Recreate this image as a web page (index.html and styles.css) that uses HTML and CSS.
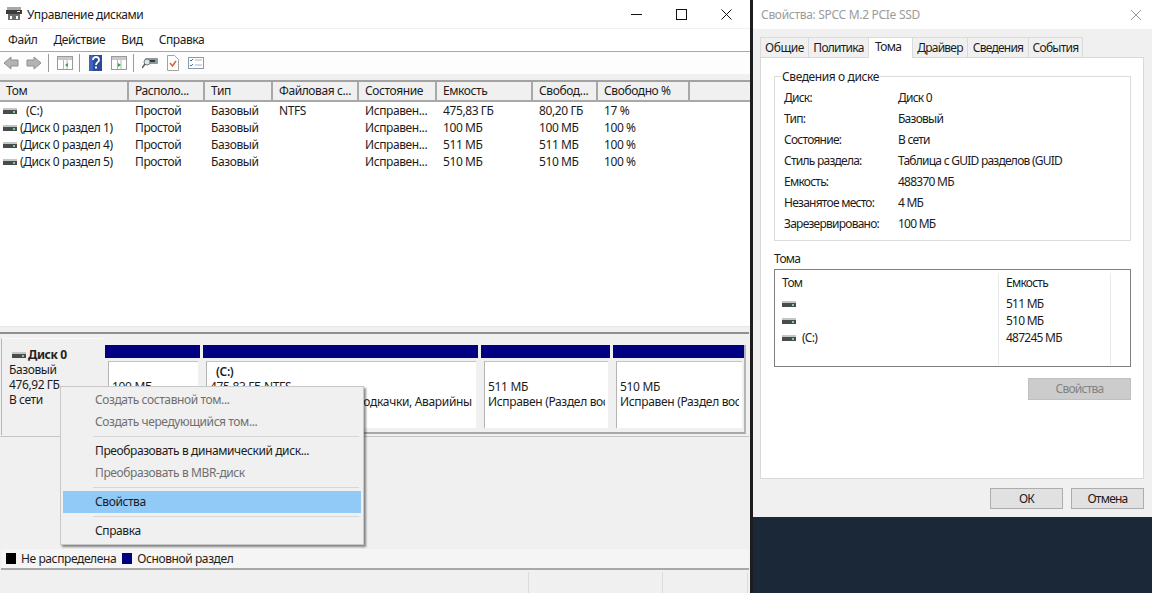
FILE: index.html
```html
<!DOCTYPE html>
<html lang="ru">
<head>
<meta charset="utf-8">
<title>Управление дисками</title>
<link rel="stylesheet" href="styles.css">
</head>
<body>
<svg class="defs" width="0" height="0" aria-hidden="true">
  <defs>
    <g id="drive">
      <rect x="0" y="0" width="14" height="2" fill="#c4c6c6"/>
      <rect x="0" y="2" width="14" height="4" fill="#4a4c4c"/>
      <rect x="10" y="3" width="2" height="2" fill="#7fd08a"/>
    </g>
  </defs>
</svg>

<main class="window mgmt">
  <header class="titlebar">
    <svg class="app-icon" width="16" height="14" viewBox="0 0 16 14">
      <rect x="1" y="0" width="14" height="3" fill="#a8a8a8"/>
      <path d="M0 3h16v4H0z" fill="#3c3c3c"/>
      <path d="M2 7h12v6H2z" fill="#6d6d6d"/>
      <rect x="4" y="9" width="2" height="3" fill="#fff"/>
      <rect x="10" y="9" width="2" height="3" fill="#fff"/>
      <rect x="11" y="4" width="3" height="1" fill="#cfe8d2"/>
    </svg>
    <span class="title">Управление дисками</span>
    <div class="controls">
      <svg width="11" height="11" viewBox="0 0 11 11"><path d="M0 5.500h11" stroke="#111" fill="none"/></svg>
      <svg width="11" height="11" viewBox="0 0 11 11"><rect x=".5" y=".5" width="10" height="10" stroke="#111" fill="none"/></svg>
      <svg width="11" height="11" viewBox="0 0 11 11"><path d="M.5.5l10 10M10.500.5l-10 10" stroke="#111" fill="none"/></svg>
    </div>
  </header>

  <nav class="menubar">
    <span>Файл</span><span>Действие</span><span>Вид</span><span>Справка</span>
  </nav>

  <div class="toolbar">
    <svg class="tool" width="16" height="16" viewBox="0 0 16 16"><path d="M8 2L1 8l7 6v-3h7V5H8z" fill="#b4b4b4" stroke="#8f8f8f"/></svg>
    <svg class="tool tool-fwd" width="16" height="16" viewBox="0 0 16 16"><path d="M8 2l7 6-7 6v-3H1V5h7z" fill="#b4b4b4" stroke="#8f8f8f"/></svg>
    <i class="tool-sep"></i>
    <svg class="tool" width="16" height="14" viewBox="0 0 16 14"><rect x=".5" y=".5" width="15" height="13" fill="#fff" stroke="#9a9a9a"/><path d="M1 1h14v3H1z" fill="#c8c8c8"/><path d="M6.500 4v9M10 4v9" stroke="#b5b5b5"/><path d="M11 7v4L8 9z" fill="#3da04a"/></svg>
    <i class="tool-sep"></i>
    <svg class="tool tool-help" width="13" height="16" viewBox="0 0 13 16"><rect width="13" height="16" fill="#2b4a9b"/><rect width="4" height="16" fill="#3f63bd"/><path d="M4 5c0-4 6-4 6 0 0 2-3 2.500-3 5" stroke="#fff" stroke-width="1.800" fill="none"/><rect x="6" y="11.500" width="2" height="2" fill="#fff"/></svg>
    <svg class="tool tool-tight" width="16" height="14" viewBox="0 0 16 14"><rect x=".5" y=".5" width="15" height="13" fill="#fff" stroke="#9a9a9a"/><path d="M1 1h14v3H1z" fill="#c8c8c8"/><path d="M6.500 4v9M10 4v9" stroke="#b5b5b5"/><path d="M7 7v4l3-2z" fill="#3da04a"/></svg>
    <i class="tool-sep"></i>
    <svg class="tool" width="16" height="14" viewBox="0 0 16 14"><rect x="3" y="2" width="13" height="6" rx="1" fill="#8d9a9c"/><rect x="8" y="4" width="5" height="2" fill="#2e3b3d"/><circle cx="5" cy="6" r="3" fill="#d8e4e8" stroke="#6f7b7e"/><path d="M3 8l-3 4" stroke="#6a5a48" stroke-width="1.500"/></svg>
    <svg class="tool tool-doc" width="12" height="16" viewBox="0 0 12 16"><path d="M.5.5h7l4 4v11H.5z" fill="#fff" stroke="#a2a2a2"/><path d="M3 8l2.500 3L9 6" stroke="#d9623a" stroke-width="1.500" fill="none"/></svg>
    <svg class="tool tool-check" width="16" height="12" viewBox="0 0 16 12"><rect x=".5" y=".5" width="15" height="11" fill="#fff" stroke="#8a9aaa"/><path d="M2 3l1 1 2-2M2 8l1 1 2-2" stroke="#3a70b0" fill="none"/><path d="M7 3h7M7 8h7" stroke="#a9b4be"/></svg>
  </div>
  <div class="strip"></div>

  <section class="list">
    <div class="list-head">
      <span>Том</span><span>Располо...</span><span>Тип</span><span>Файловая с...</span><span>Состояние</span><span>Емкость</span><span>Свобод...</span><span>Свободно %</span><span></span>
    </div>
    <div class="list-row">
      <span class="vol"><svg width="14" height="6"><use href="#drive"/></svg><b class="c-name">(C:)</b></span><span>Простой</span><span>Базовый</span><span>NTFS</span><span>Исправен...</span><span>475,83 ГБ</span><span>80,20 ГБ</span><span>17 %</span>
    </div>
    <div class="list-row">
      <span class="vol"><svg width="14" height="6"><use href="#drive"/></svg>(Диск 0 раздел 1)</span><span>Простой</span><span>Базовый</span><span></span><span>Исправен...</span><span>100 МБ</span><span>100 МБ</span><span>100 %</span>
    </div>
    <div class="list-row">
      <span class="vol"><svg width="14" height="6"><use href="#drive"/></svg>(Диск 0 раздел 4)</span><span>Простой</span><span>Базовый</span><span></span><span>Исправен...</span><span>511 МБ</span><span>511 МБ</span><span>100 %</span>
    </div>
    <div class="list-row">
      <span class="vol"><svg width="14" height="6"><use href="#drive"/></svg>(Диск 0 раздел 5)</span><span>Простой</span><span>Базовый</span><span></span><span>Исправен...</span><span>510 МБ</span><span>510 МБ</span><span>100 %</span>
    </div>
  </section>

  <section class="graph">
    <div class="disk-row">
      <div class="disk-label">
        <div class="disk-name"><svg width="14" height="6"><use href="#drive"/></svg><b>Диск 0</b></div>
        <div>Базовый</div>
        <div>476,92 ГБ</div>
        <div>В сети</div>
      </div>
      <div class="parts">
        <div class="part p1"><div class="bar"></div><div class="box"><div class="line">&nbsp;</div><div class="line">100 МБ</div></div></div>
        <div class="part p2"><div class="bar"></div><div class="box"><div class="line"><b class="c-bold">(C:)</b></div><div class="line">475,83 ГБ NTFS</div><div class="line">Исправен (Загрузка, Файл подкачки, Аварийны</div></div></div>
        <div class="part p3"><div class="bar"></div><div class="box"><div class="line">&nbsp;</div><div class="line">511 МБ</div><div class="line">Исправен (Раздел вос</div></div></div>
        <div class="part p4"><div class="bar"></div><div class="box"><div class="line">&nbsp;</div><div class="line">510 МБ</div><div class="line">Исправен (Раздел вос</div></div></div>
      </div>
    </div>
  </section>

  <div class="legend">
    <i class="sw sw-black"></i><span>Не распределена</span>
    <i class="sw sw-navy"></i><span>Основной раздел</span>
  </div>
  <footer class="status"><i></i><i></i><i></i></footer>

  <div class="ctx">
    <div class="ctx-item off">Создать составной том...</div>
    <div class="ctx-item off">Создать чередующийся том...</div>
    <hr>
    <div class="ctx-item">Преобразовать в динамический диск...</div>
    <div class="ctx-item off">Преобразовать в MBR-диск</div>
    <hr>
    <div class="ctx-item sel">Свойства</div>
    <hr>
    <div class="ctx-item">Справка</div>
  </div>
</main>

<aside class="window props">
  <header class="ptitle">
    <span>Свойства: SPCC M.2 PCIe SSD</span>
    <svg width="12" height="12" viewBox="0 0 12 12"><path d="M1 1l10 10M11 1L1 11" stroke="#9a9a9a" fill="none"/></svg>
  </header>
  <div class="tabs">
    <span class="tab t1">Общие</span><span class="tab t2">Политика</span><span class="tab t3 active">Тома</span><span class="tab t4">Драйвер</span><span class="tab t5">Сведения</span><span class="tab t6">События</span>
  </div>
  <div class="panel">
    <fieldset class="group">
      <legend>Сведения о диске</legend>
      <dl class="info">
        <dt>Диск:</dt><dd>Диск 0</dd>
        <dt>Тип:</dt><dd>Базовый</dd>
        <dt>Состояние:</dt><dd>В сети</dd>
        <dt>Стиль раздела:</dt><dd>Таблица с GUID разделов (GUID</dd>
        <dt>Емкость:</dt><dd>488370 МБ</dd>
        <dt>Незанятое место:</dt><dd>4 МБ</dd>
        <dt>Зарезервировано:</dt><dd>100 МБ</dd>
      </dl>
    </fieldset>
    <div class="vol-label">Тома</div>
    <div class="vol-list">
      <div class="vl-head"><span>Том</span><span>Емкость</span><span></span></div>
      <div class="vl-row"><span class="vl-name"><svg width="14" height="6"><use href="#drive"/></svg></span><span>511 МБ</span></div>
      <div class="vl-row"><span class="vl-name"><svg width="14" height="6"><use href="#drive"/></svg></span><span>510 МБ</span></div>
      <div class="vl-row"><span class="vl-name"><svg width="14" height="6"><use href="#drive"/></svg>(C:)</span><span>487245 МБ</span></div>
    </div>
    <div class="pbtn-row"><span class="btn-disabled">Свойства</span></div>
  </div>
  <footer class="pfoot">
    <span class="btn">ОК</span><span class="btn">Отмена</span>
  </footer>
</aside>
</body>
</html>
```
FILE: styles.css
```css
* { box-sizing: border-box; }
html, body { margin: 0; height: 100%; }
body {
  position: relative;
  width: 1152px;
  height: 593px;
  overflow: hidden;
  background: #1b2838;
  font: 12px/17px "Noto Sans", "Open Sans", sans-serif;
  letter-spacing: -0.4px;
  color: #1c1c1c;
}
.defs { position: absolute; }
.window { position: absolute; top: 0; }

/* Disk management window */
.mgmt {
  left: 0;
  width: 753px;
  height: 593px;
  background: #f0f0f0;
  border-right: 3px solid #1d1d20;
  display: flex;
  flex-direction: column;
}
.titlebar {
  height: 28px;
  margin-bottom: 1px;
  background: #fff;
  display: flex;
  align-items: center;
  padding-left: 6px;
}
.app-icon { margin-right: 5px; }
.controls {
  margin-left: auto;
  display: flex;
  gap: 34px;
  padding-right: 18px;
}
.menubar {
  height: 23px;
  background: #fff;
  border-bottom: 1px solid #a9a9a9;
  display: flex;
  align-items: center;
  gap: 16px;
  padding: 0 0 1px 8px;
}
.toolbar {
  height: 22px;
  background: #fdfdfd;
  display: flex;
  align-items: center;
  padding-left: 3px;
}
.tool-fwd { margin-left: 7px; }
.tool-sep { width: 1px; height: 18px; background: #9a9a9a; margin: 0 8px 0 6px; }
.tool-help { margin-left: 1px; }
.tool-tight { margin-left: 9px; }
.tool-doc { margin-left: 9px; }
.tool-check { margin-left: 9px; }
.strip { height: 8px; background: #f0f0f0; border-bottom: 2px solid #a2a2a2; }

.list { height: 245px; background: #fff; border-bottom: 1px solid #e6e6e6; flex: none; }
.list-head, .list-row {
  display: grid;
  grid-template-columns: 129px 76px 68px 86px 78px 96px 65px 92px 58px;
  white-space: nowrap;
}
.list-head {
  height: 20px;
  background: #f0f0f0;
  border-bottom: 2px solid #a8a8a8;
  line-height: 18px;
}
.list-head span { padding-left: 6px; border-right: 2px solid #a8a8a8; }
.list-head span:last-child { border-right: 0; }
.list-row { height: 17px; }
.list-row span { padding-left: 6px; }
.list-row .vol {
  padding-left: 3px;
  display: flex;
  align-items: center;
  gap: 3px;
}
.c-name { font-weight: normal; margin-left: 6px; }

/* Graphical disk area */
.graph {
  height: 222px;
  flex: none;
  padding-top: 5px;
}
.disk-row {
  border-top: 2px solid #8f8f8f;
  height: 105px;
  border-bottom: 1px solid #c4c4c4;
  display: flex;
  padding: 4px 0 0 1px;
  margin-right: 1px;
}
.disk-label {
  flex: none;
  width: 102px;
  height: 97px;
  padding: 8px 0 0 7px;
  border-left: 1px solid #b8b8b8;
  border-top: 1px solid #fafafa;
  line-height: 15px;
}
.disk-name { display: flex; align-items: center; gap: 2px; margin-left: 3px; }
.disk-name b { color: #222; }
.parts {
  flex: none;
  margin: 7px 0 0 2px;
  display: flex;
  height: 89px;
  border-right: 2px solid #b5b5b5;
  border-bottom: 2px solid #a8a8a8;
}
.part { flex: none; padding-right: 3px; overflow: hidden; }
.p1 { width: 98px; }
.p2 { width: 278px; }
.p3 { width: 132px; }
.p4 { width: 131px; padding-right: 0; }
.bar { height: 13px; background: #000080; }
.box {
  margin: 3px 2px 0 3px;
  height: 67px;
  background: #fff;
  border-left: 1px solid #b4b4b4;
  border-top: 1px solid #c4c4c4;
  padding: 2px 3px 0 3px;
  line-height: 15px;
  white-space: nowrap;
  letter-spacing: -0.33px;
}
.line { overflow: hidden; }
.c-bold { margin-left: 6px; font-weight: 600; }

.legend {
  height: 21px;
  flex: none;
  margin: 0 1px;
  background: #f5f5f5;
  border-bottom: 2px solid #a8a8a8;
  display: flex;
  align-items: center;
  padding-left: 5px;
}
.sw { width: 10px; height: 11px; margin-right: 5px; }
.sw-black { background: #000; }
.sw-navy { background: #000080; margin-left: 6px; }

.status { flex: 1; display: flex; justify-content: flex-end; padding-top: 2px; }
.status i { width: 1px; background: #dcdcdc; }
.status i:nth-child(1) { margin-right: 133px; }
.status i:nth-child(2) { margin-right: 84px; }
.status i:nth-child(3) { margin-right: 2px; }

/* Context menu */
.ctx {
  position: absolute;
  left: 60px;
  top: 386px;
  width: 304px;
  height: 159px;
  padding: 2px;
  background: #f0f0f0;
  border: 1px solid #c8c8c8;
  box-shadow: 2px 2px 2px rgba(0, 0, 0, .45);
}
.ctx-item { height: 22px; padding-left: 32px; line-height: 22px; }
.ctx-item.off { color: #6f6f6f; }
.ctx-item.sel { background: #91c9f7; }
.ctx hr { height: 1px; margin: 3px 2px 3px 30px; border: 0; background: #d6d6d6; }

/* Properties dialog */
.props {
  left: 753px;
  width: 399px;
  height: 517px;
  background: #f0f0f0;
  display: flex;
  flex-direction: column;
  letter-spacing: -0.75px;
}
.ptitle {
  height: 29px;
  flex: none;
  background: #fff;
  display: flex;
  align-items: center;
  justify-content: space-between;
  padding: 0 10px 0 8px;
  color: #9b9b9b;
  letter-spacing: -0.3px;
}
.tabs {
  height: 29px;
  flex: none;
  display: flex;
  align-items: flex-end;
  padding-left: 7px;
  position: relative;
  z-index: 1;
}
.tab {
  height: 20px;
  line-height: 20px;
  text-align: center;
  background: #f0f0f0;
  border: 1px solid #dadada;
  border-bottom: 0;
  margin-left: -1px;
  margin-bottom: 1px;
}
.tab.t1 { width: 49px; margin-left: 0; letter-spacing: -0.4px; }
.t2 { width: 61px; }
.t3 { width: 45px; }
.t4 { width: 56px; }
.t5 { width: 62px; }
.t6 { width: 55px; }
.tab.active { height: 21px; margin-bottom: 0; padding-right: 5px; background: #fff; line-height: 17px; }
.panel {
  height: 422px;
  flex: none;
  margin-left: 7px;
  width: 384px;
  background: #fff;
  border: 1px solid #d9d9d9;
  margin-top: -1px;
  padding: 0 13px;
}
.group {
  margin: 10px 0 0;
  padding: 0 0 0 9px;
  height: 173px;
  width: 357px;
  border: 1px solid #dcdcdc;
}
.group legend { padding: 0 1px; margin-left: -3px; line-height: 17px; letter-spacing: -0.4px; }
.info {
  display: grid;
  grid-template-columns: 114px 1fr;
  grid-auto-rows: 21px;
  margin: 2px 0 0;
  line-height: 21px;
  white-space: nowrap;
}
.info dd { margin: 0; }
.vol-label { margin-top: 9px; height: 19px; line-height: 17px; }
.vol-list {
  height: 98px;
  width: 357px;
  border: 1px solid #7f7f7f;
  padding-top: 3px;
}
.vl-head {
  display: grid;
  grid-template-columns: 224px 112px 1fr;
  height: 22px;
}
.vl-head span { padding-left: 7px; line-height: 20px; border-right: 1px solid #eaeaea; height: 92px; }
.vl-head span:last-child { border-right: 0; }
.vl-row {
  display: grid;
  grid-template-columns: 224px 112px;
  height: 17px;
  line-height: 17px;
}
.vl-row span { padding-left: 7px; }
.vl-name { display: flex; align-items: center; gap: 6px; }
.pbtn-row { display: flex; justify-content: flex-end; margin-top: 11px; width: 357px; }
.btn-disabled {
  width: 103px;
  height: 22px;
  background: #cccccc;
  border: 1px solid #bfbfbf;
  color: #838383;
  text-align: center;
  line-height: 20px;
}
.pfoot {
  display: flex;
  justify-content: flex-end;
  gap: 8px;
  padding: 9px 8px 0 0;
}
.btn {
  width: 73px;
  height: 21px;
  background: #e1e1e1;
  border: 1px solid #adadad;
  text-align: center;
  line-height: 19px;
}
```
